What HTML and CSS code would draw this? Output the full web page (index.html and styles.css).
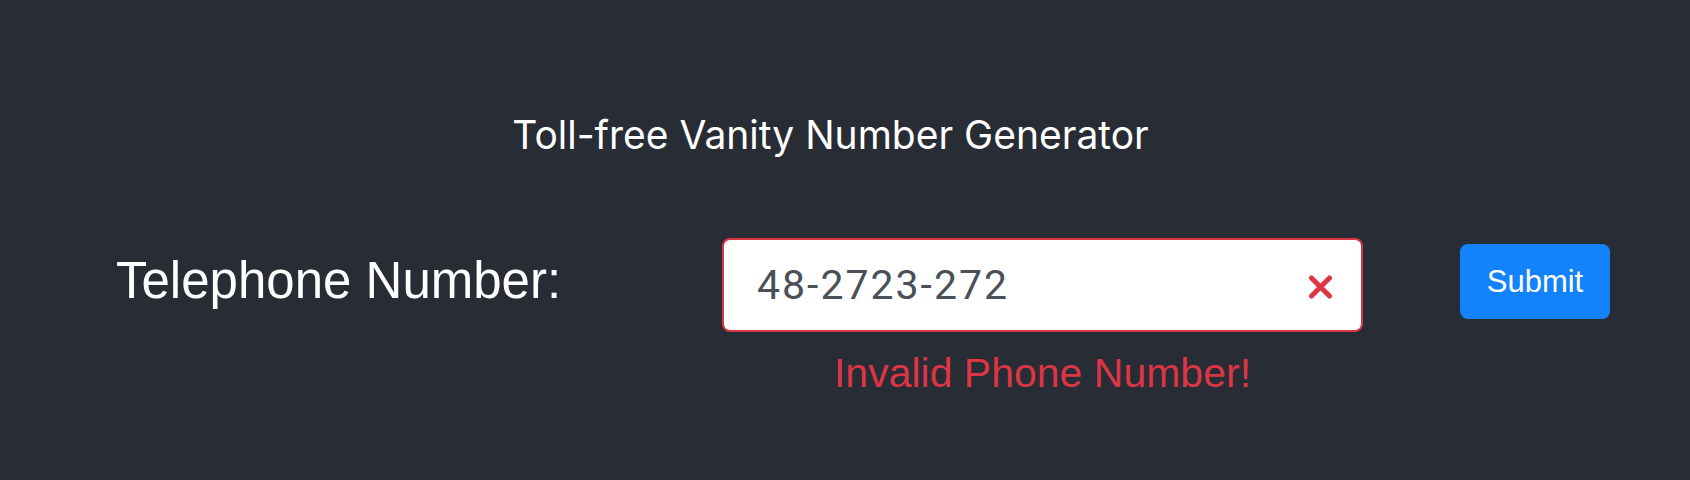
FILE: index.html
```html
<!DOCTYPE html>
<html lang="en">
<head>
<meta charset="utf-8">
<title>Toll-free Vanity Number Generator</title>
<link rel="stylesheet" href="styles.css">
</head>
<body>
<div class="app">
  <h1 class="title">Toll-free Vanity Number Generator</h1>
  <form class="row">
    <label class="label" for="phone">Telephone Number:</label>
    <div class="field">
      <div class="input-wrap">
        <input id="phone" class="input" type="text" value="48-2723-272">
        <svg class="x-icon" width="25" height="24" viewBox="0 0 25 24" aria-hidden="true">
          <path d="M3.5 3 L21.5 21 M21.5 3 L3.5 21" stroke="#dc3545" stroke-width="5" stroke-linecap="round" fill="none"/>
        </svg>
      </div>
      <div class="error">Invalid Phone Number!</div>
    </div>
    <button class="submit" type="button">Submit</button>
  </form>
</div>
</body>
</html>
```
FILE: styles.css
```css
html, body {
  margin: 0;
  padding: 0;
  background: #282c34;
}
.app {
  width: 1690px;
  height: 480px;
  box-sizing: border-box;
  padding-top: 109px;
  color: #fff;
}
.title {
  margin: 0;
  padding-right: 29px;
  text-align: center;
  font-family: "Inter", sans-serif;
  font-weight: 400;
  font-size: 39px;
  line-height: 52px;
}
.row {
  display: flex;
  align-items: flex-start;
  margin-top: 77px;
  padding-left: 116px;
}
.label {
  width: 606px;
  font-family: "Liberation Sans", Arial, sans-serif;
  font-size: 51px;
  line-height: 60px;
  margin-top: 13px;
}
.field {
  width: 641px;
  display: flex;
  flex-direction: column;
  align-items: center;
}
.input-wrap {
  position: relative;
  width: 100%;
}
.input {
  display: block;
  width: 100%;
  height: 94px;
  box-sizing: border-box;
  border: 2px solid #dc3545;
  border-radius: 8px;
  background: #fff;
  padding: 0 80px 0 33px;
  font-family: "Roboto", sans-serif;
  font-size: 41px;
  letter-spacing: 2px;
  color: #495057;
  outline: none;
}
.x-icon {
  position: absolute;
  left: 586px;
  top: 37px;
}
.error {
  margin-top: 17px;
  font-family: "Liberation Sans", Arial, sans-serif;
  font-size: 41px;
  line-height: 48px;
  color: #dc3545;
}
.submit {
  margin-left: 97px;
  margin-top: 6px;
  width: 150px;
  height: 75px;
  border: none;
  border-radius: 8px;
  background: #1482fa;
  color: #fff;
  font-family: "Liberation Sans", Arial, sans-serif;
  font-size: 31px;
  padding: 0;
}
```
